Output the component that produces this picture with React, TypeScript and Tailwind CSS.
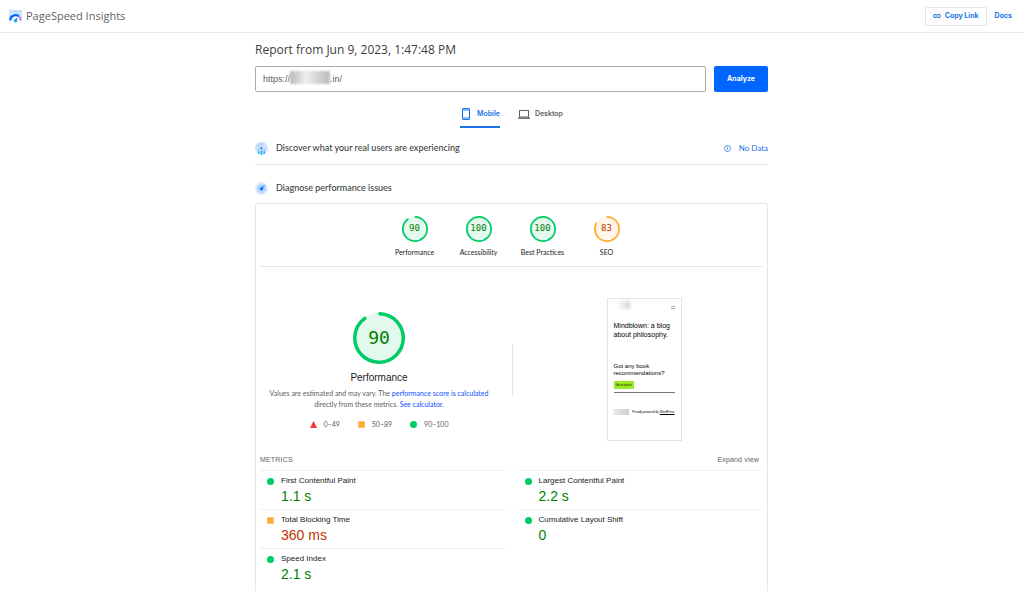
import { useState } from "react";
import clsx from "clsx";

type Rating = "pass" | "average" | "fail";

interface GaugeProps {
  score: number;
  label: string;
  large?: boolean;
}

interface Metric {
  name: string;
  value: string;
  rating: Rating;
}

const categories = [
  { label: "Performance", score: 90 },
  { label: "Accessibility", score: 100 },
  { label: "Best Practices", score: 100 },
  { label: "SEO", score: 83 },
];

const metrics: Metric[] = [
  { name: "First Contentful Paint", value: "1.1 s", rating: "pass" },
  { name: "Largest Contentful Paint", value: "2.2 s", rating: "pass" },
  { name: "Total Blocking Time", value: "360 ms", rating: "average" },
  { name: "Cumulative Layout Shift", value: "0", rating: "pass" },
  { name: "Speed Index", value: "2.1 s", rating: "pass" },
];

const legend: { range: string; rating: Rating }[] = [
  { range: "0–49", rating: "fail" },
  { range: "50–89", rating: "average" },
  { range: "90–100", rating: "pass" },
];

const titleFont = "font-['Open_Sans',sans-serif]";
const controlFont = "font-[Inter,sans-serif]";
const bodyFont = "font-[Lato,Arial,sans-serif]";
const reportFont = "font-['Liberation_Sans',Arial,sans-serif]";

function RatingMark({ rating }: { rating: Rating }) {
  return (
    <svg viewBox="0 0 12 12" className="size-[7px] shrink-0" aria-hidden="true">
      {rating === "fail" && <path d="M6 0L12 12H0Z" fill="#ff3333" />}
      {rating === "average" && <rect x=".5" y=".5" width="11" height="11" fill="#ffaa33" />}
      {rating === "pass" && <circle cx="6" cy="6" r="6" fill="#00cc66" />}
    </svg>
  );
}

function Gauge({ score, label, large = false }: GaugeProps) {
  const pass = score >= 90;
  const circumference = 2 * Math.PI * 56;
  const arc = score === 100 ? circumference : (score / 100) * circumference - 4;

  return (
    <div className="flex flex-col items-center">
      <div className={clsx("grid place-items-center", large ? "size-[52px]" : "size-[26px]")}>
        <svg viewBox="0 0 120 120" className="col-start-1 row-start-1 size-full" aria-hidden="true">
          <circle cx="60" cy="60" r="58" fill={pass ? "#e3f9ed" : "#fff5e9"} />
          <circle
            cx="60"
            cy="60"
            r="56"
            fill="none"
            stroke={pass ? "#00cc66" : "#ffaa33"}
            strokeWidth="8"
            strokeLinecap="round"
            strokeDasharray={`${arc} ${circumference}`}
            transform="rotate(-88 60 60)"
          />
        </svg>
        <span
          className={clsx(
            "col-start-1 row-start-1 font-['DejaVu_Sans_Mono',monospace]",
            large ? "text-lg" : "text-[9px]",
            pass ? "text-[#018001]" : "text-[#c33300]"
          )}
        >
          {score}
        </span>
      </div>
      <div
        className={clsx(
          "whitespace-nowrap text-[#212121]",
          large ? "mt-2 text-[10px] leading-3" : "mt-1 text-[7px] leading-3",
          large ? reportFont : bodyFont
        )}
      >
        {label}
      </div>
    </div>
  );
}

function Logo() {
  return (
    <svg viewBox="0 0 26 26" className="size-[13px]" aria-hidden="true">
      <rect width="26" height="21" rx="1" fill="#d2e6fd" />
      <rect width="26" height="5" fill="#bfdcfb" />
      <circle cx="3" cy="2.5" r="1" fill="#fff" />
      <circle cx="6.5" cy="2.5" r="1" fill="#fff" />
      <path d="M2 22a11 11 0 0 1 22 0" fill="#fff" />
      <path d="M2.500 21A10.500 10.500 0 0 1 19.500 12.600" fill="none" stroke="#0066ff" strokeWidth="4.500" />
      <path d="M19.500 12.600A10.500 10.500 0 0 1 23.500 21" fill="none" stroke="#c184f5" strokeWidth="4.500" />
      <path d="M13 21L16 17" stroke="#0066ff" strokeWidth="3" />
      <circle cx="13" cy="21.500" r="3.500" fill="#1aa7ff" />
    </svg>
  );
}

function LinkIcon() {
  return (
    <svg viewBox="0 0 20 10" className="h-1 w-2" fill="none" stroke="currentColor" strokeWidth="2.400" aria-hidden="true">
      <path d="M9 1.200H5a3.800 3.800 0 0 0 0 7.600H9M11 1.200h4a3.800 3.800 0 0 1 0 7.600H11M6 5h8" />
    </svg>
  );
}

function UsersIcon() {
  return (
    <svg viewBox="0 0 26 26" className="size-[13px]" aria-hidden="true">
      <circle cx="13" cy="13" r="13" fill="#d0e4fc" />
      <path d="M2 8a12 12 0 0 1 18-5L8 14Z" fill="#bcd9fb" />
      <circle cx="13" cy="12.500" r="2.200" fill="#0066ff" />
      <path d="M11 17h4v8h-4ZM6 19h3v5H6ZM17 19h3v5h-3Z" fill="#35b4fb" />
      <circle cx="7.500" cy="16" r="1.500" fill="#35b4fb" />
      <circle cx="18.500" cy="16" r="1.500" fill="#35b4fb" />
    </svg>
  );
}

function DiagnoseIcon() {
  return (
    <svg viewBox="0 0 26 26" className="size-[13px]" aria-hidden="true">
      <circle cx="13" cy="13" r="13" fill="#dbeafd" />
      <circle cx="13" cy="13" r="9" fill="#b5d6fc" />
      <path d="M11 11L21 5L15 15Z" fill="#35b4fb" />
      <circle cx="13" cy="13.500" r="3.200" fill="#0066ff" />
    </svg>
  );
}

function PagePreview() {
  return (
    <div className="flex h-[143px] w-[75px] flex-col border border-[#e3e3e3] px-[6px] pt-[2px] text-black">
      <div className="flex h-3 items-start justify-between">
        <div className="ml-1 h-2 w-3 bg-linear-to-r from-[#f8f8f8] to-[#d8d8d8] blur-[1px]" />
        <svg viewBox="0 0 6 4" className="mt-[5px] h-[3px] w-1" aria-hidden="true">
          <path d="M0 .5h6M0 3.500h6" stroke="#777" />
        </svg>
      </div>
      <div className="mt-2 whitespace-nowrap text-[7px] leading-[9px]">
        Mindblown: a blog
        <br />
        about philosophy.
      </div>
      <div className="mt-6 whitespace-nowrap text-[6px] leading-[7px]">
        Got any book
        <br />
        recommendations?
      </div>
      <button type="button" className="mt-1 h-2 w-5 bg-[#9bea25] text-center text-[3px] leading-2">
        Get in touch
      </button>
      <div className="mt-[3px] border-t border-[#777]" />
      <div className="mt-4 flex items-center justify-between whitespace-nowrap text-[3px] leading-[6px]">
        <div className="-ml-px h-[6px] w-4 bg-linear-to-r from-[#eeeeee] to-[#cccccc]" />
        <span>
          Proudly powered by <a href="#wordpress" className="underline">WordPress</a>
        </span>
      </div>
    </div>
  );
}

function App() {
  const [url, setUrl] = useState("https://" + "\u00a0".repeat(16) + ".in/");
  const [device, setDevice] = useState("mobile");

  return (
    <div className={clsx("flex min-h-screen flex-col bg-white", reportFont)}>
      <header className="flex h-[33px] items-center justify-between border-b border-[#e8eaed] pr-3 pl-[9px]">
        <div className="flex items-center gap-1">
          <Logo />
          <span className={clsx("text-[11px] leading-4 text-[#5f6368]", titleFont)}>PageSpeed Insights</span>
        </div>
        <div className={clsx("flex items-center gap-2 text-[7px] font-bold text-[#1a73e8]", controlFont)}>
          <button type="button" className="flex h-[19px] items-center gap-1 rounded-xs border border-[#e3e5e8] px-[7px]">
            <LinkIcon />
            Copy Link
          </button>
          <a href="#docs">Docs</a>
        </div>
      </header>

      <main className="mx-auto flex w-full max-w-[514px] grow flex-col pr-px">
        <h1 className={clsx("mt-[9px] text-[12px] leading-4 text-[#3c4043]", titleFont)}>
          Report from Jun 9, 2023, 1:47:48 PM
        </h1>

        <form className="mt-2 flex gap-2" onSubmit={(e) => e.preventDefault()}>
          <div className="relative flex grow">
            <input
              type="text"
              aria-label="Enter a web page URL"
              value={url}
              onChange={(e) => setUrl(e.target.value)}
              className="h-[26px] w-full rounded-xs border border-[#a9acb0] px-[7px] text-[9px] text-[#5f6368]"
            />
            {/* masked domain */}
            <div className="absolute top-[5px] left-[35px] h-[13px] w-10 bg-linear-to-r from-[#b9b9b9] via-[#eeeeee] via-40% to-[#b9b9b9] blur-[1px]" />
          </div>
          <button type="submit" className={clsx("h-[26px] w-[54px] rounded-xs bg-[#0066ff] text-[7px] font-bold text-white", controlFont)}>
            Analyze
          </button>
        </form>

        <div role="tablist" className={clsx("mt-[10px] flex justify-center gap-[18px] text-[7px] font-semibold", controlFont)}>
          <button
            type="button"
            role="tab"
            aria-selected={device === "mobile"}
            onClick={() => setDevice("mobile")}
            className={clsx(
              "flex h-[26px] items-center gap-[5px] border-b-2",
              device === "mobile" ? "border-[#1a73e8] text-[#1a73e8]" : "border-transparent text-[#5f6368]"
            )}
          >
            <svg viewBox="0 0 12 12" className="size-3" fill="none" stroke="currentColor" aria-hidden="true">
              <rect x="2.500" y=".5" width="7" height="11" rx=".5" />
              <path d="M2.500 2h7M2.500 10h7" strokeWidth="1.200" />
            </svg>
            Mobile
          </button>
          <button
            type="button"
            role="tab"
            aria-selected={device === "desktop"}
            onClick={() => setDevice("desktop")}
            className={clsx(
              "flex h-[26px] items-center gap-[5px] border-b-2",
              device === "desktop" ? "border-[#1a73e8] text-[#1a73e8]" : "border-transparent text-[#5f6368]"
            )}
          >
            <svg viewBox="0 0 12 10" className="h-[10px] w-3" fill="none" stroke="currentColor" aria-hidden="true">
              <rect x="1.500" y="1.500" width="9" height="6.500" />
              <path d="M0 9.200h12" strokeWidth="1.400" />
            </svg>
            Desktop
          </button>
        </div>

        <section className={clsx("mt-1 flex h-[33px] items-center border-b border-[#e8eaed]", bodyFont)}>
          <UsersIcon />
          <h2 className="ml-2 text-[9px] font-medium text-[#3c4043]">Discover what your real users are experiencing</h2>
          <a href="#no-data" className="ml-auto flex items-center gap-2 text-[8px] text-[#1a73e8]">
            <svg viewBox="0 0 14 14" className="size-[7px]" fill="none" stroke="currentColor" strokeWidth="1.500" aria-hidden="true">
              <circle cx="7" cy="7" r="6" />
              <path d="M7 3.500v4.500M7 9.200v1.500" />
            </svg>
            No Data
          </a>
        </section>

        <div className={clsx("mt-[15px] mb-[7px] flex h-4 items-center gap-2", bodyFont)}>
          <DiagnoseIcon />
          <h2 className="text-[9px] font-medium text-[#3c4043]">Diagnose performance issues</h2>
        </div>

        <section className="grow rounded-t-sm border border-b-0 border-[#e3e5e8] px-1 pt-3">
          <div className="flex h-[51px] justify-center border-b border-[#e8e8e8] pr-[2px]">
            {categories.map((category) => (
              <div key={category.label} className="w-16">
                <Gauge score={category.score} label={category.label} />
              </div>
            ))}
          </div>

          <div className="mt-[31px] flex">
            <div className="flex flex-1 flex-col items-center pt-[14px] pr-[14px]">
              <Gauge score={90} label="Performance" large />
              <p className={clsx("mt-1 text-center text-[7px] leading-[11px] text-[#616161]", bodyFont)}>
                Values are estimated and may vary. The{" "}
                <a href="#scoring" className="text-[#0c50ff]">performance score is calculated</a>
                <br />
                directly from these metrics. <a href="#calculator" className="text-[#0c50ff]">See calculator.</a>
              </p>
              <div className={clsx("mt-2 flex gap-[18px] text-[7px] leading-3 text-[#616161]", bodyFont)}>
                {legend.map((item) => (
                  <div key={item.range} className="flex items-center gap-[7px]">
                    <RatingMark rating={item.rating} />
                    {item.range}
                  </div>
                ))}
              </div>
            </div>
            <div className="h-[52px] w-px self-center bg-[#e3e3e3]" />
            <div className="flex flex-1 justify-center pl-3">
              <PagePreview />
            </div>
          </div>

          <div className="mt-[11px] mb-[2px] flex h-4 items-center justify-between pr-1 text-[7px] text-[#616161]">
            <h3 className="tracking-wide">METRICS</h3>
            <button type="button" className="tracking-wide">Expand view</button>
          </div>

          <div className="grid grid-cols-2 gap-x-3">
            {metrics.map((metric) => (
              <div key={metric.name} className="flex h-[39px] gap-[7px] border-t border-[#f0f0f0] pt-1 pl-[7px]">
                <div className="pt-[3px]">
                  <RatingMark rating={metric.rating} />
                </div>
                <div>
                  <div className="text-[8px] leading-3 text-[#212121]">{metric.name}</div>
                  <div
                    className={clsx(
                      "text-[14px] leading-[18px]",
                      metric.rating === "pass" ? "text-[#018001]" : "text-[#c33300]"
                    )}
                  >
                    {metric.value}
                  </div>
                </div>
              </div>
            ))}
          </div>
        </section>
      </main>
    </div>
  );
}

export default App;
